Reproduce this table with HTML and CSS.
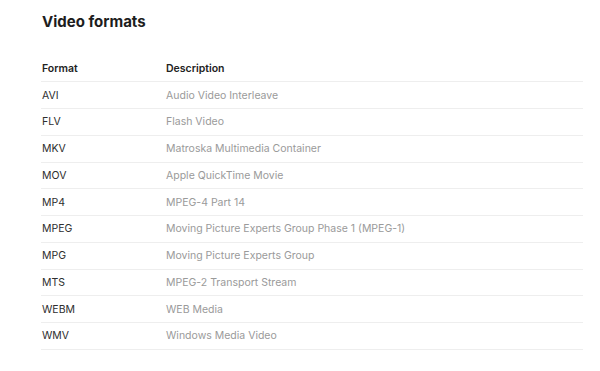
FILE: index.html
```html
<!DOCTYPE html>
<html lang="en">
<head>
    <meta charset="UTF-8" />
    <meta name="viewport" content="width=device-width, initial-scale=1.0"/>
    <title>Video formats</title>
    <link rel="stylesheet" href="styles.css">
</head>
<body>
    <section class="formats">
        <h1>Video formats</h1>
        <table class="format-table">
            <thead>
                <tr>
                    <th>Format</th>
                    <th>Description</th>
                </tr>
            </thead>
            <tbody>
                <tr><td>AVI</td><td>Audio Video Interleave</td></tr>
                <tr><td>FLV</td><td>Flash Video</td></tr>
                <tr><td>MKV</td><td>Matroska Multimedia Container</td></tr>
                <tr><td>MOV</td><td>Apple QuickTime Movie</td></tr>
                <tr><td>MP4</td><td>MPEG-4 Part 14</td></tr>
                <tr><td>MPEG</td><td>Moving Picture Experts Group Phase 1 (MPEG-1)</td></tr>
                <tr><td>MPG</td><td>Moving Picture Experts Group</td></tr>
                <tr><td>MTS</td><td>MPEG-2 Transport Stream</td></tr>
                <tr><td>WEBM</td><td>WEB Media</td></tr>
                <tr><td>WMV</td><td>Windows Media Video</td></tr>
            </tbody>
        </table>
    </section>
</body>
</html>
```

FILE: styles.css
```css
* {
    margin: 0;
    padding: 0;
    box-sizing: border-box;
}

body {
    font-family: Inter, 'Noto Sans', sans-serif;
    background: #fff;
    color: #222;
}

.formats {
    padding: 10px 16px 0 42px;
}

h1 {
    font-size: 15px;
    font-weight: 700;
    line-height: 24px;
    color: #1d1d1d;
    margin-bottom: 21px;
}

.format-table {
    width: 542px;
    margin-left: -1px;
    border-collapse: collapse;
    font-size: 10.5px;
}

.format-table th,
.format-table td {
    text-align: left;
    height: 26.75px;
    padding: 0 0 0 1px;
    border-bottom: 1px solid #eeeeee;
    vertical-align: middle;
}

.format-table th {
    font-weight: 600;
    color: #222;
}

.format-table th:first-child,
.format-table td:first-child {
    width: 124px;
}

.format-table td:first-child {
    color: #2e2e2e;
}

.format-table td:last-child {
    color: #9a9a9a;
}
```
